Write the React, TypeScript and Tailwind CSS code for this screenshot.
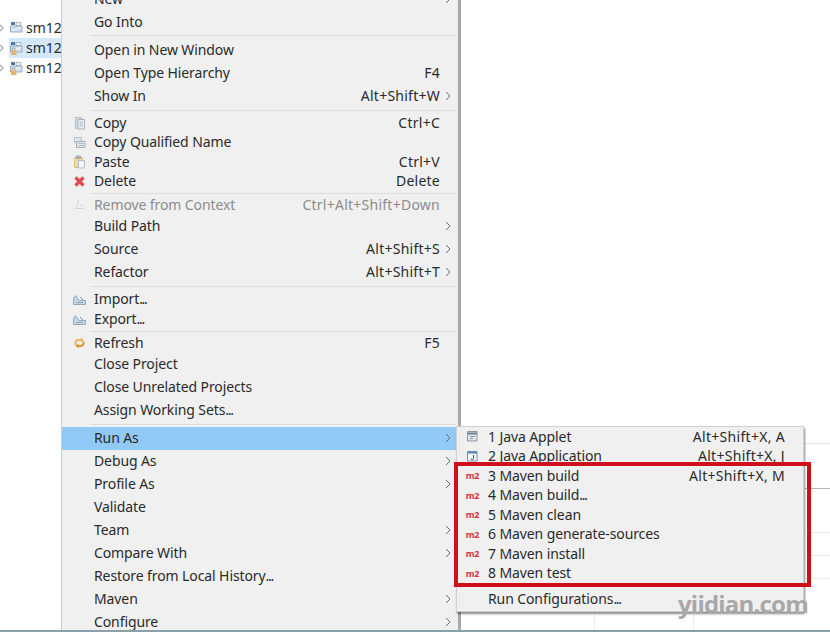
import React from "react";

function Chevron() {
  return (
    <svg width="6" height="10" viewBox="0 0 6 10" fill="none" stroke="#6b6b6b" strokeWidth="1">
      <path d="M1 1l4 4-4 4" />
    </svg>
  );
}

function Doc() {
  return (
    <svg width="13" height="14" viewBox="0 0 13 14" fill="none">
      <path d="M2.5 1.5h6v11h-6z" fill="#d5dde4" stroke="#b4bec8" />
      <path d="M5 3.5h6.5v9.500H5z" fill="#eef2f5" stroke="#a4b1bd" />
      <path d="M6.500 6h3.500M6.500 8h3.500M6.500 10h3.500" stroke="#a9b6c2" />
    </svg>
  );
}

function DocPair() {
  return (
    <svg width="13" height="13" viewBox="0 0 13 13" fill="none">
      <path d="M1.500 1.500h7v5h-7z" fill="#e2e7ec" stroke="#b6c0ca" />
      <path d="M3.500 5.500h8.500v6H3.500z" fill="#dfe6ec" stroke="#a4b1bd" />
      <path d="M5.500 7.500h5M5.500 9.500h5" stroke="#aeb9c3" />
    </svg>
  );
}

function Paste() {
  return (
    <svg width="13" height="14" viewBox="0 0 13 14" fill="none">
      <path d="M1.500 2.500h8v10h-8z" fill="#eed9a8" stroke="#dcc184" />
      <path d="M3.500 1h4v2.500h-4z" fill="#b9b9b2" stroke="#a5a59e" />
      <path d="M5.500 5.500h6v7.500h-6z" fill="#f3f5f6" stroke="#b3bcc5" />
    </svg>
  );
}

function Cross() {
  return (
    <svg width="13" height="13" viewBox="0 0 13 13" fill="none" stroke="#de4a50" strokeWidth="3.200">
      <path d="M2.500 2.500l8 8M10.500 2.500l-8 8" />
    </svg>
  );
}

function RemoveIcon() {
  return (
    <svg width="13" height="13" viewBox="0 0 13 13" fill="none" stroke="#d2d2d2" strokeWidth="1">
      <path d="M5 2v5l-2.500 3.500h8M7 6l3 3" />
    </svg>
  );
}

function Tray() {
  return (
    <svg width="13" height="11" viewBox="0 0 13 11" fill="none">
      <path d="M.5 10.500v-6l2-3 3.500 5h6.500v4z" fill="#c6d6e6" stroke="#93a9be" />
      <path d="M3 8.500h7" stroke="#8fa6bb" />
      <path d="M7 3l3 3" stroke="#7e95aa" />
    </svg>
  );
}

function RefreshIcon() {
  return (
    <svg width="13" height="13" viewBox="0 0 13 13" fill="none" strokeWidth="2">
      <path d="M2.500 9.500V7a3 3 0 0 1 3-3H9" stroke="#e9b75b" />
      <path d="M10.500 5.500V7a3 3 0 0 1-3 3H5" stroke="#d9962e" />
      <path d="M8 1.500L11 4 8 6.500z" fill="#e9b75b" strokeWidth="0" />
      <path d="M5.500 7.500L2.500 10l3 2.500z" fill="#d9962e" strokeWidth="0" />
    </svg>
  );
}

function M2() {
  return <span className="text-[9px] font-bold leading-none tracking-[-0.2px] text-[#d8343c]">m2</span>;
}

function Applet() {
  return (
    <svg width="11" height="11" viewBox="0 0 11 11" fill="none">
      <path d="M.5 .5h9.500v9.500H.5z" fill="#dfe5ea" stroke="#8a96a2" />
      <path d="M1 2.500h9" stroke="#6c7f92" strokeWidth="2" />
      <path d="M3 5.500h5M3 7.500h3" stroke="#8d99a5" />
    </svg>
  );
}

function JavaApp() {
  return (
    <svg width="11" height="11" viewBox="0 0 11 11" fill="none">
      <path d="M.5 .5h9.500v9.500H.5z" fill="#f2f5f7" stroke="#6f97bb" />
      <path d="M1 1.500h9" stroke="#5b86ad" strokeWidth="2" />
      <path d="M6.500 4v3.500a1.200 1.200 0 0 1-2.400 0" stroke="#27598a" />
    </svg>
  );
}

function TreeIcon({ lock }: { lock?: boolean }) {
  return (
    <svg width="13" height="14" viewBox="0 0 13 14" fill="none">
      <path d="M1 1h4v3H1z" fill="#52779b" />
      <path d="M6 1.500h5v3H6z" fill="#eef3f7" stroke="#8ba2b7" strokeWidth="0.7" />
      <path d="M.5 5h11.500v6H.5z" fill="#d4e1ec" stroke="#86a0b8" strokeWidth="0.8" />
      <path d="M2.500 9.500L10.500 6.500" stroke="#f7fafc" />
      {lock && <path d="M1 9.500h5.500V14H1z" fill="#e3b564" />}
      {lock && <path d="M2.500 9.500V8a1.200 1.200 0 0 1 2.500 0v1.500" stroke="#8f8f80" strokeWidth="0.8" />}
    </svg>
  );
}

// the original menu draws "..." with narrow dots
function Label({ text }: { text: string }) {
  const dots = text.endsWith("...");
  return (
    <span className="flex-1 whitespace-nowrap tracking-[-0.1px]">
      {dots ? text.slice(0, -3) : text}
      {dots && <span className="tracking-[-1.3px]">...</span>}
    </span>
  );
}

function Row({
  label,
  h = "h-[23px]",
  icon,
  keys,
  arrow,
  dim,
  active,
}: {
  label: string;
  h?: string;
  icon?: React.ReactNode;
  keys?: string;
  arrow?: boolean;
  dim?: boolean;
  active?: boolean;
}) {
  return (
    <div className={`flex ${h} shrink-0 items-center ${active ? "bg-[#91c9f7]" : ""} ${dim ? "text-[#8c8c8c]" : "text-[#2a2a2a]"}`}>
      <div className="flex w-[32px] shrink-0 items-center justify-center pl-[2px]">{icon}</div>
      <Label text={label} />
      {keys && <span className="whitespace-nowrap tracking-[0.25px]">{keys}</span>}
      <div className="flex w-[18px] shrink-0 justify-center pr-[3px]">{arrow && <Chevron />}</div>
    </div>
  );
}

function Sep({ h }: { h: string }) {
  return (
    <div className={`flex ${h} shrink-0 items-center pl-[28px] pr-[2px]`}>
      <div className="h-px w-full bg-[#dcdcdc]" />
    </div>
  );
}

function SubRow({ n, icon, keys }: { n: string; icon?: React.ReactNode; keys?: string }) {
  return (
    <div className="flex h-[19.5px] items-center">
      <div className="flex w-[31px] shrink-0 items-center justify-center">{icon}</div>
      <Label text={n} />
      {keys && <span className="whitespace-nowrap tracking-[0.3px]">{keys}</span>}
    </div>
  );
}

export default function App() {
  return (
    <div className="relative h-[637px] w-[830px] overflow-hidden bg-white font-['Noto_Sans','Open_Sans',sans-serif] text-[14px] leading-none">
      <div className="flex h-[630px]">
        {/* project tree */}
        <div className="flex w-[61px] shrink-0 flex-col overflow-hidden pt-[18px] text-[#2a2a2a]">
          {[false, true, false].map((sel, i) => (
            <div key={i} className="flex h-[20px] items-center">
              <div className="flex w-[9px] shrink-0 items-center">
                <svg width="4" height="8" viewBox="0 0 4 8" fill="none" stroke="#a5a5a5" strokeWidth="1.2">
                  <path d="M0 1l3 3-3 3" />
                </svg>
              </div>
              <div className={`flex h-[20px] flex-1 items-center gap-[3px] pl-[1px] ${sel ? "bg-[#d3e9fb]" : ""}`}>
                <TreeIcon lock={i > 0} />
                <span className="whitespace-nowrap">sm12</span>
              </div>
            </div>
          ))}
        </div>

        {/* context menu */}
        <div className="h-full w-[400px] shrink-0 overflow-hidden border-l border-l-[#cfcfcf] border-r-[3px] border-r-[#a9a9a9] bg-[#f0f0f0]">
          <div className="-mt-[13px] flex flex-col">
            <Row label="New" arrow />
            <Row label="Go Into" />
            <Sep h="h-[5px]" />
            <Row label="Open in New Window" />
            <Row label="Open Type Hierarchy" keys="F4" />
            <Row label="Show In" keys="Alt+Shift+W" arrow />
            <Sep h="h-[6px]" />
            <Row label="Copy" h="h-[19.5px]" icon={<Doc />} keys="Ctrl+C" />
            <Row label="Copy Qualified Name" h="h-[19.5px]" icon={<DocPair />} />
            <Row label="Paste" h="h-[19.5px]" icon={<Paste />} keys="Ctrl+V" />
            <Row label="Delete" h="h-[19.5px]" icon={<Cross />} keys="Delete" />
            <Sep h="h-[4px]" />
            <Row label="Remove from Context" h="h-[19px]" icon={<RemoveIcon />} keys="Ctrl+Alt+Shift+Down" dim />
            <Row label="Build Path" arrow />
            <Row label="Source" keys="Alt+Shift+S" arrow />
            <Row label="Refactor" keys="Alt+Shift+T" arrow />
            <Sep h="h-[6px]" />
            <Row label="Import..." h="h-[20px]" icon={<Tray />} />
            <Row label="Export..." h="h-[20px]" icon={<Tray />} />
            <Sep h="h-[4px]" />
            <Row label="Refresh" h="h-[19px]" icon={<RefreshIcon />} keys="F5" />
            <Row label="Close Project" />
            <Row label="Close Unrelated Projects" />
            <Row label="Assign Working Sets..." />
            <Sep h="h-[6px]" />
            <div className="flex flex-col [&>div]:pb-[1px]">
              <Row label="Run As" active arrow />
              <Row label="Debug As" arrow />
              <Row label="Profile As" arrow />
              <Row label="Validate" />
              <Row label="Team" arrow />
              <Row label="Compare With" arrow />
              <Row label="Restore from Local History..." />
              <Row label="Maven" arrow />
              <Row label="Configure" arrow />
            </div>
          </div>
        </div>

        {/* editor area behind the menu */}
        <div className="flex flex-1 flex-col pt-[443px]">
          <div className="ml-auto h-px w-[25px] bg-[#dbe6f1]" />
          <div className="ml-auto mt-[44px] h-px w-[25px] bg-[#b5b5b5]" />
          <div className="ml-auto mt-[43px] h-px w-[25px] bg-[#ececec]" />
          <div className="ml-auto mt-[22px] h-px w-[25px] bg-[#ececec]" />
          <div className="ml-auto mt-[22px] h-px w-[25px] bg-[#ececec]" />
          <div className="mt-auto flex h-[18px] pl-[133px]">
            <div className="h-full w-[100px] border-x border-[#ececec]" />
          </div>
        </div>
      </div>
      <div className="h-[2px] bg-[#8ba0a8]" />

      {/* Run As submenu */}
      <div className="absolute left-[456px] top-[426px] flex h-[186px] w-[348px] flex-col border border-[#d0d0d0] bg-[#f0f0f0] pr-[18px] text-[#2a2a2a] shadow-[1px_2px_2px_rgba(0,0,0,0.45)]">
        <SubRow n="1 Java Applet" icon={<Applet />} keys="Alt+Shift+X, A" />
        <SubRow n="2 Java Application" icon={<JavaApp />} keys="Alt+Shift+X, J" />
        <SubRow n="3 Maven build" icon={<M2 />} keys="Alt+Shift+X, M" />
        <SubRow n="4 Maven build..." icon={<M2 />} />
        <SubRow n="5 Maven clean" icon={<M2 />} />
        <SubRow n="6 Maven generate-sources" icon={<M2 />} />
        <SubRow n="7 Maven install" icon={<M2 />} />
        <SubRow n="8 Maven test" icon={<M2 />} />
        <div className="mt-[6px]">
          <SubRow n="Run Configurations..." />
        </div>
      </div>

      {/* annotation and watermark */}
      <div className="absolute left-[454px] top-[462px] h-[125px] w-[357px] border-[4px] border-[#cf0f1a]" />
      <div className="absolute left-[678px] top-[589px] font-['Open_Sans',sans-serif] text-[24px] font-bold leading-[30px] tracking-[-0.8px] text-[#a8a8a8]">
        yiidian.com
      </div>
    </div>
  );
}
